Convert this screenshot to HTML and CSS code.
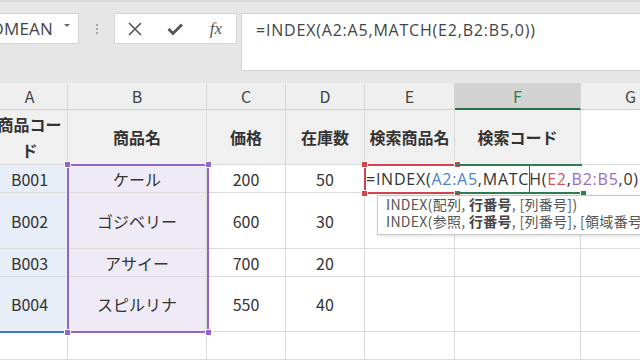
FILE: index.html
```html
<!DOCTYPE html>
<html lang="ja">
<head>
    <meta charset="UTF-8">
    <title>INDEX MATCH</title>
    <link rel="stylesheet" href="styles.css">
</head>
<body>
    <!-- 数式バー -->
    <div class="toolbar">
        <div class="namebox">
            <span class="name">GEOMEAN</span>
            <span class="arrow"></span>
        </div>
        <div class="dots"><i></i><i></i><i></i></div>
        <div class="fxbox">
            <span class="btn"><svg width="14" height="14" viewBox="0 0 14 14"><path d="M1 1 L13 13 M13 1 L1 13" stroke="#555" stroke-width="1.6" fill="none"/></svg></span>
            <span class="btn"><svg width="16" height="14" viewBox="0 0 16 14"><path d="M1.5 7 L6 11.5 L15 2.5" stroke="#555" stroke-width="2.8" fill="none"/></svg></span>
            <span class="btn fx">fx</span>
        </div>
        <div class="formula">=INDEX(A2:A5,MATCH(E2,B2:B5,0))</div>
    </div>

    <!-- シート -->
    <div class="sheet">
        <div class="ch">A</div>
        <div class="ch">B</div>
        <div class="ch">C</div>
        <div class="ch">D</div>
        <div class="ch">E</div>
        <div class="ch active">F</div>
        <div class="ch">G</div>

        <div class="cell head">商品コード</div>
        <div class="cell head">商品名</div>
        <div class="cell head">価格</div>
        <div class="cell head">在庫数</div>
        <div class="cell head">検索商品名</div>
        <div class="cell head">検索コード</div>
        <div class="cell"></div>

        <div class="cell ref-a">B001</div>
        <div class="cell ref-b">ケール</div>
        <div class="cell">200</div>
        <div class="cell">50</div>
        <div class="cell"></div>
        <div class="cell"></div>
        <div class="cell"></div>

        <div class="cell ref-a">B002</div>
        <div class="cell ref-b">ゴジベリー</div>
        <div class="cell">600</div>
        <div class="cell">30</div>
        <div class="cell"></div>
        <div class="cell"></div>
        <div class="cell"></div>

        <div class="cell ref-a">B003</div>
        <div class="cell ref-b">アサイー</div>
        <div class="cell">700</div>
        <div class="cell">20</div>
        <div class="cell"></div>
        <div class="cell"></div>
        <div class="cell"></div>

        <div class="cell ref-a">B004</div>
        <div class="cell ref-b">スピルリナ</div>
        <div class="cell">550</div>
        <div class="cell">40</div>
        <div class="cell"></div>
        <div class="cell"></div>
        <div class="cell"></div>

        <div class="cell"></div>
        <div class="cell"></div>
        <div class="cell"></div>
        <div class="cell"></div>
        <div class="cell"></div>
        <div class="cell"></div>
        <div class="cell"></div>

        <!-- 参照範囲の枠 -->
        <div class="range range-a"></div>
        <div class="range range-b"><i class="sq tl"></i><i class="sq tr"></i><i class="sq bl"></i><i class="sq br"></i></div>
        <div class="editing">=INDEX(<span class="c-a">A2:A5</span>,MATC<span class="caret"></span>H(<span class="c-e">E2</span>,<span class="c-b">B2:B5</span>,0)</div>
        <div class="range range-e"><i class="sq tl"></i><i class="sq tr"></i><i class="sq bl"></i><i class="sq br"></i></div>
        <div class="range range-f"><i class="sq br"></i></div>

        <div class="tip">
            <div>INDEX(配列, <b>行番号</b>, [列番号])</div>
            <div>INDEX(参照, <b>行番号</b>, [列番号], [領域番号])</div>
        </div>
    </div>
</body>
</html>
```

FILE: styles.css
```css
body {
    margin: 0;
    width: 640px;
    height: 360px;
    overflow: hidden;
    background-color: #fff;
    color: #333;
    font-family: "Noto Sans CJK JP", sans-serif;
}

.toolbar {
    height: 83px;
    box-sizing: border-box;
    background-color: #e6e6e6;
    border-top: 2px solid #d9d9d9;
    padding-top: 11px;
    display: flex;
    align-items: flex-start;
    overflow: hidden;
}

.namebox {
    flex: none;
    width: 100px;
    height: 31px;
    margin-left: -21px;
    box-sizing: border-box;
    background-color: #fff;
    border: 1px solid #d4d4d4;
    display: flex;
    align-items: center;
    justify-content: flex-end;
    padding-right: 8px;
    font-family: "Open Sans", sans-serif;
    font-size: 17px;
    letter-spacing: 0.2px;
    color: #444;
    white-space: nowrap;
}

.namebox .name {
    margin-right: 11px;
}

.namebox .arrow {
    flex: none;
    width: 0;
    height: 0;
    border-left: 3px solid transparent;
    border-right: 3px solid transparent;
    border-top: 3px solid #666;
    margin-bottom: 6px;
}

.dots {
    flex: none;
    width: 35px;
    height: 31px;
    display: flex;
    flex-direction: column;
    align-items: center;
    justify-content: center;
    gap: 2px;
}

.dots i {
    width: 2px;
    height: 2px;
    background-color: #a6a6a6;
}

.fxbox {
    flex: none;
    width: 123px;
    height: 31px;
    box-sizing: border-box;
    background-color: #fff;
    border: 1px solid #d4d4d4;
    display: flex;
    align-items: center;
}

.btn {
    width: 41px;
    display: flex;
    align-items: center;
    justify-content: center;
}

.fx {
    font-family: "Liberation Serif", serif;
    font-style: italic;
    font-size: 17px;
    color: #555;
}

.formula {
    flex: none;
    width: 420px;
    height: 58px;
    margin-left: 4px;
    box-sizing: border-box;
    background-color: #fff;
    border: 1px solid #d4d4d4;
    padding: 2px 0 0 14px;
    font-family: "Open Sans", sans-serif;
    font-size: 16px;
    letter-spacing: 0.8px;
    line-height: 28px;
    color: #444;
}

.sheet {
    position: relative;
    margin-left: -8px;
    display: grid;
    grid-template-columns: 76px 139px 79px 79px 90px 126px 100px;
    grid-template-rows: 27px 55px 28px 56px 28px 55px 28px;
}

.ch {
    background-color: #efefef;
    border-right: 1px solid #d6d6d6;
    border-bottom: 1px solid #cfcfcf;
    display: flex;
    align-items: center;
    justify-content: center;
    font-size: 16px;
    color: #444;
}

.ch.active {
    background-color: #d3d3d3;
    color: #2f7d52;
    border-bottom: 2px solid #217346;
}

.cell {
    border-right: 1px solid #dadada;
    border-bottom: 1px solid #dadada;
    display: flex;
    align-items: center;
    justify-content: center;
    text-align: center;
    font-size: 16px;
    line-height: 26px;
}

.cell.head {
    background-color: #f0f0f0;
    font-weight: bold;
}

.ref-a {
    background-color: #e8eef8;
}

.ref-b {
    background-color: #efebf6;
}

.range {
    position: absolute;
    box-sizing: border-box;
}

.range-a {
    left: 0;
    top: 248px;
    width: 76px;
    height: 2px;
    background-color: #3f78d8;
}

.range-b {
    left: 75px;
    top: 81px;
    width: 142px;
    height: 169px;
    border: 2px solid #9265c8;
}

.range-e {
    left: 372px;
    top: 81px;
    width: 92px;
    height: 30px;
    border: 2px solid #d0444e;
    border-right: none;
}

.range-f {
    left: 464px;
    top: 81px;
    width: 126px;
    height: 30px;
    border-top: 2px solid #2e7d50;
    border-bottom: 2px solid #2e7d50;
}

.sq {
    position: absolute;
    width: 5px;
    height: 5px;
    border: 1px solid #fff;
}

.range-b .sq { background-color: #9265c8; }
.range-e .sq { background-color: #d0444e; }
.range-f .sq { background-color: #2e7d50; }

.sq.tl { left: -5px; top: -5px; }
.sq.tr { right: -5px; top: -5px; }
.sq.bl { left: -5px; bottom: -5px; }
.sq.br { right: -5px; bottom: -5px; }

.editing {
    position: absolute;
    left: 374px;
    top: 82px;
    width: 290px;
    height: 28px;
    background-color: #fff;
    font-family: "Open Sans", sans-serif;
    font-size: 16px;
    letter-spacing: 0.75px;
    line-height: 28px;
    color: #333;
    white-space: nowrap;
}

.c-a { color: #4a7fcf; }
.c-e { color: #d9505c; }
.c-b { color: #9a6ac8; }

.caret {
    display: inline-block;
    width: 0;
    height: 28px;
    margin-right: -1px;
    border-left: 1px solid #555;
    vertical-align: top;
}

.tip {
    position: absolute;
    left: 385px;
    top: 112px;
    width: 300px;
    box-sizing: border-box;
    padding: 0 8px 4px;
    background-color: #fff;
    border: 1px solid #c8c8c8;
    box-shadow: 1px 1px 3px rgba(0, 0, 0, 0.15);
    font-size: 14px;
    letter-spacing: 0.3px;
    line-height: 17px;
    color: #555;
    white-space: nowrap;
}

.tip b {
    color: #444;
}
```
